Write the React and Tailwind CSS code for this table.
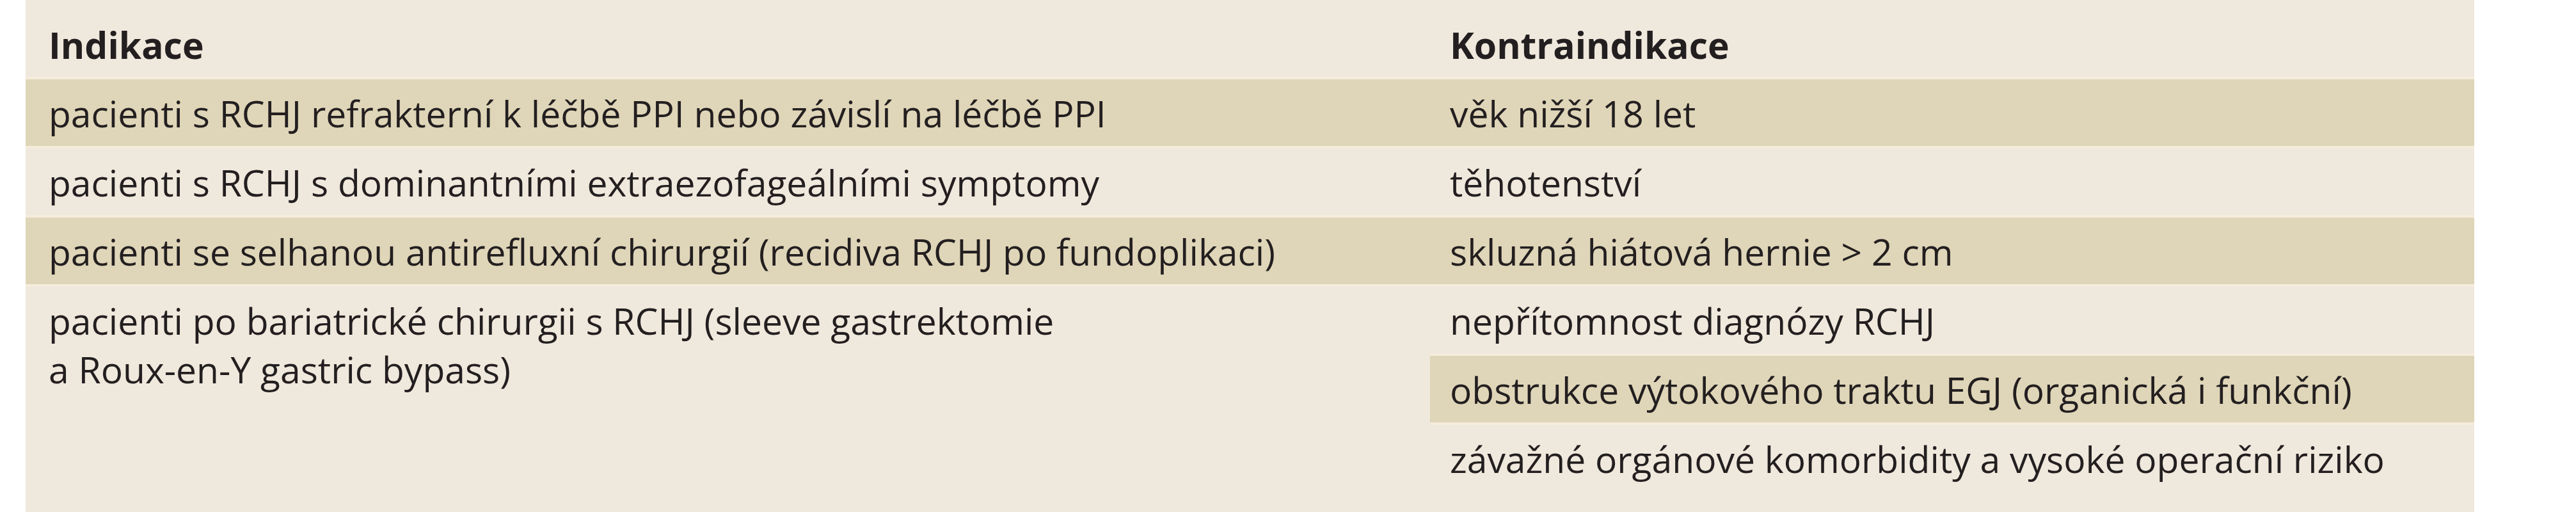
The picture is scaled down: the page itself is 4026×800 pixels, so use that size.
import React from 'react'

const dark = 'bg-[#dfd5b8]'
const light = 'bg-[#efe8dc]'

const fullRows = [
  ['pacienti s RCHJ refrakterní k léčbě PPI nebo závislí na léčbě PPI', 'věk nižší 18 let', dark],
  ['pacienti s RCHJ s dominantními extraezofageálními symptomy', 'těhotenství', light],
  ['pacienti se selhanou antirefluxní chirurgií (recidiva RCHJ po fundoplikaci)', 'skluzná hiátová hernie > 2 cm', dark],
]

const rightRows = [
  ['nepřítomnost diagnózy RCHJ', light],
  ['obstrukce výtokového traktu EGJ (organická i funkční)', dark],
  ['závažné orgánové komorbidity a vysoké operační riziko', light],
]

function Cell({ children, bg, right }) {
  return (
    <div className={`${bg} border-t-4 border-[#f5ecdc] pt-[15px] pb-[13px] ${right ? 'pl-[31px]' : 'pl-[36px]'}`}>
      {children}
    </div>
  )
}

export default function App() {
  return (
    <div className="min-h-[800px] bg-white pl-[40px] overflow-hidden">
      <div
        className="w-[3827px] bg-[#efe8dc] text-[#231f20] text-[57px] leading-[76px] pb-[60px]"
        style={{ fontFamily: '"Open Sans", sans-serif' }}
      >
        <div className="grid grid-cols-[2195px_1632px]">
          <div className="h-[120px] pt-[32px] pl-[36px] font-bold">Indikace</div>
          <div className="h-[120px] pt-[32px] pl-[31px] font-bold">Kontraindikace</div>

          {fullRows.map(([l, r, bg]) => (
            <React.Fragment key={l}>
              <Cell bg={bg}>{l}</Cell>
              <Cell bg={bg} right>{r}</Cell>
            </React.Fragment>
          ))}

          <div className={`${light} row-span-3 border-t-4 border-[#f5ecdc] pt-[15px] pl-[36px]`}>
            pacienti po bariatrické chirurgii s RCHJ (sleeve gastrektomie
            <br />
            a Roux-en-Y gastric bypass)
          </div>
          {rightRows.map(([t, bg]) => (
            <Cell key={t} bg={bg} right>{t}</Cell>
          ))}
        </div>
      </div>
    </div>
  )
}
